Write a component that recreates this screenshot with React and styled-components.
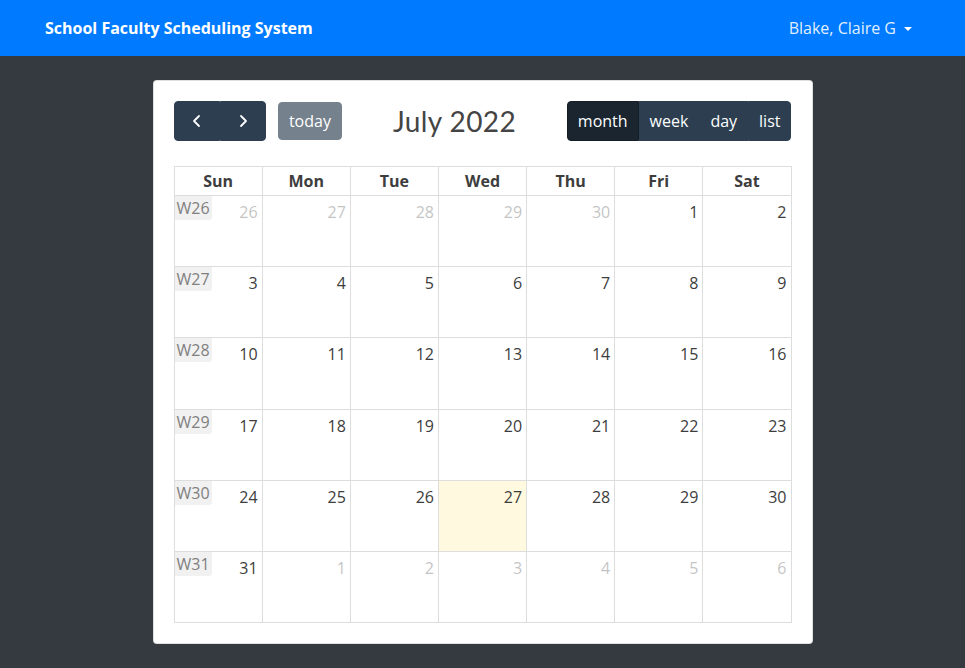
import styled, { createGlobalStyle } from 'styled-components'

const GlobalStyle = createGlobalStyle`
    html, body {
        margin: 0;
        padding: 0;
        background-color: #343a40;
        font-family: "Open Sans", "Noto Sans", sans-serif;
        color: #212529;
    }
    * { box-sizing: border-box; }
`

const DAYS = ['Sun', 'Mon', 'Tue', 'Wed', 'Thu', 'Fri', 'Sat']

// july 2022, starting sunday june 26
const buildWeeks = () => {
    const weeks = []
    const start = new Date(2022, 5, 26)
    for (let w = 0; w < 6; w++) {
        const days = []
        for (let d = 0; d < 7; d++) {
            const date = new Date(start)
            date.setDate(start.getDate() + w * 7 + d)
            days.push({
                day: date.getDate(),
                other: date.getMonth() !== 6,
                today: date.getMonth() === 6 && date.getDate() === 27,
            })
        }
        weeks.push({ num: 26 + w, days })
    }
    return weeks
}

const ChevronLeft = () => (
    <svg width="24" height="16" viewBox="0 0 24 16" fill="none">
        <path d="M14 3 L9 8 L14 13" stroke="#fff" strokeWidth="1.8" strokeLinecap="round" strokeLinejoin="round" />
    </svg>
)

const ChevronRight = () => (
    <svg width="24" height="16" viewBox="0 0 24 16" fill="none">
        <path d="M10 3 L15 8 L10 13" stroke="#fff" strokeWidth="1.8" strokeLinecap="round" strokeLinejoin="round" />
    </svg>
)

export default function App() {
    const weeks = buildWeeks()
    return (
        <>
            <GlobalStyle />
            <Navbar>
                <Brand>School Faculty Scheduling System</Brand>
                <UserMenu>
                    Blake, Claire G
                    <Caret />
                </UserMenu>
            </Navbar>
            <Main>
                <Card>
                    <Toolbar>
                        <ToolbarChunk>
                            <ButtonGroup>
                                <CalButton aria-label="prev"><ChevronLeft /></CalButton>
                                <CalButton aria-label="next"><ChevronRight /></CalButton>
                            </ButtonGroup>
                            <TodayButton disabled>today</TodayButton>
                        </ToolbarChunk>
                        <Title>July 2022</Title>
                        <ButtonGroup>
                            <CalButton $active>month</CalButton>
                            <CalButton>week</CalButton>
                            <CalButton>day</CalButton>
                            <CalButton>list</CalButton>
                        </ButtonGroup>
                    </Toolbar>
                    <Grid>
                        {DAYS.map(d => (
                            <HeaderCell key={d}>{d}</HeaderCell>
                        ))}
                        {weeks.map(week =>
                            week.days.map((d, i) => (
                                <DayCell key={week.num + '-' + i} $today={d.today}>
                                    <DayTop>
                                        {i === 0 && <WeekNumber>W{week.num}</WeekNumber>}
                                        <DayNumber $other={d.other}>{d.day}</DayNumber>
                                    </DayTop>
                                </DayCell>
                            ))
                        )}
                    </Grid>
                </Card>
            </Main>
        </>
    )
}

const Navbar = styled.nav`
    height: 56px;
    background-color: #007bff;
    display: flex;
    align-items: center;
    justify-content: space-between;
    padding: 0 45px;
`
const Brand = styled.span`
    color: #fff;
    font-weight: 700;
    font-size: 16px;
`
const UserMenu = styled.span`
    color: rgba(255, 255, 255, .9);
    font-size: 16px;
    padding: 8px;
    display: flex;
    align-items: center;
    gap: 8px;
`
const Caret = styled.span`
    width: 0;
    height: 0;
    border-top: 4.5px solid #fff;
    border-left: 4px solid transparent;
    border-right: 4px solid transparent;
    margin-top: 1px;
`
const Main = styled.main`
    display: flex;
    justify-content: center;
    padding: 24px 0 25px;
`
const Card = styled.div`
    width: 660px;
    background: #fff;
    border: 1px solid rgba(0, 0, 0, .125);
    border-radius: 4px;
    padding: 20px;
`
const Toolbar = styled.div`
    display: flex;
    justify-content: space-between;
    align-items: center;
    margin-bottom: 25px;
`
const ToolbarChunk = styled.div`
    display: flex;
    align-items: center;
    gap: 12px;
`
const ButtonGroup = styled.div`
    display: flex;
    & > button { border-radius: 0; }
    & > button:first-child { border-radius: 4px 0 0 4px; }
    & > button:last-child { border-radius: 0 4px 4px 0; }
`
const CalButton = styled.button`
    height: 40px;
    padding: 0 10px;
    display: flex;
    align-items: center;
    justify-content: center;
    font-family: inherit;
    font-size: 16px;
    color: #fff;
    background-color: ${p => (p.$active ? '#1a252f' : '#2c3e50')};
    border: 1px solid ${p => (p.$active ? '#151e27' : '#2c3e50')};
    cursor: pointer;
`
const TodayButton = styled.button`
    height: 38px;
    padding: 0 10.4px;
    font-family: inherit;
    font-size: 16px;
    color: #fff;
    background-color: #2c3e50;
    border: 1px solid #2c3e50;
    border-radius: 4px;
    opacity: .65;
`
const Title = styled.h2`
    margin: 0;
    font-family: "Lato", "Noto Sans", sans-serif;
    font-weight: 400;
    font-size: 28px;
    color: #444;
    letter-spacing: .4px;
`
const Grid = styled.div`
    display: grid;
    grid-template-columns: repeat(7, 1fr);
    grid-template-rows: 29px repeat(6, 71.2px);
    border-top: 1px solid #ddd;
    border-left: 1px solid #ddd;
`
const HeaderCell = styled.div`
    border-right: 1px solid #ddd;
    border-bottom: 1px solid #ddd;
    text-align: center;
    font-weight: 700;
    font-size: 16px;
    line-height: 24px;
    padding: 2px 4px;
    color: #3d3d3d;
`
const DayCell = styled.div`
    border-right: 1px solid #ddd;
    border-bottom: 1px solid #ddd;
    background-color: ${p => (p.$today ? 'rgba(255, 220, 40, .15)' : '#fff')};
`
const DayTop = styled.div`
    display: flex;
    justify-content: space-between;
    align-items: flex-start;
`
const WeekNumber = styled.span`
    padding: 2px;
    min-width: 24px;
    font-size: 16px;
    line-height: 20px;
    color: #808080;
    background-color: rgba(208, 208, 208, .3);
    border-radius: 0 0 3px 0;
`
const DayNumber = styled.span`
    margin-left: auto;
    padding: 4px;
    font-size: 16px;
    line-height: 24px;
    color: #3d3d3d;
    opacity: ${p => (p.$other ? .3 : 1)};
`
